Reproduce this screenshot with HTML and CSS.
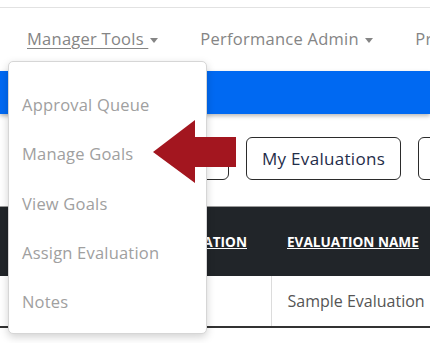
FILE: index.html
```html
<!DOCTYPE html>
<html lang="en">
<head>
    <meta charset="UTF-8">
    <meta name="viewport" content="width=device-width, initial-scale=1.0">
    <title>Manager Tools</title>
    <link rel="stylesheet" href="styles.css">
</head>
<body>
    <div class="topline"></div>

    <nav class="mainnav">
        <ul>
            <li><a href="#" class="active">Manager Tools <span class="caret"></span></a></li>
            <li><a href="#">Performance Admin <span class="caret"></span></a></li>
            <li><a href="#">Profile <span class="caret"></span></a></li>
        </ul>
    </nav>

    <div class="bluebar"></div>

    <div class="toolbar">
        <button class="btn btn-first">Team Evaluations</button>
        <button class="btn">My Evaluations</button>
        <button class="btn">Archived Evaluations</button>
    </div>

    <table class="evals">
        <colgroup>
            <col class="c1">
            <col class="c2">
            <col class="c3">
        </colgroup>
        <thead>
            <tr>
                <th class="col-first"><a href="#">TYPE OF EVALUATION</a></th>
                <th><a href="#">EVALUATION NAME</a></th>
                <th><a href="#">STATUS</a></th>
            </tr>
        </thead>
        <tbody>
            <tr>
                <td class="col-first"></td>
                <td>Sample Evaluation</td>
                <td>Open</td>
            </tr>
        </tbody>
    </table>

    <!-- open dropdown under Manager Tools -->
    <ul class="dropdown">
        <li><a href="#">Approval Queue</a></li>
        <li><a href="#">Manage Goals</a></li>
        <li><a href="#">View Goals</a></li>
        <li><a href="#">Assign Evaluation</a></li>
        <li><a href="#">Notes</a></li>
    </ul>

    <!-- callout arrow pointing at Manage Goals -->
    <svg class="callout" width="90" height="72" viewBox="150 115 90 72">
        <polygon points="153,152 195,120 195,137 236,137 236,167 195,167 195,183" fill="#a3161f"/>
    </svg>
</body>
</html>
```

FILE: styles.css
```css
* { box-sizing: border-box; }
html, body { overflow: hidden; }
body { margin: 0; font-family: "Open Sans", "Liberation Sans", sans-serif; background: #fff; width: 430px; height: 343px; position: relative; }

.topline { height: 8px; border-bottom: 1px solid #e2e2e2; }

.mainnav ul { list-style: none; margin: 0; padding: 0 0 2px 27px; display: flex; gap: 42px; height: 63px; align-items: center; white-space: nowrap; }
.mainnav a { color: #858585; font-size: 16.5px; letter-spacing: 0.25px; text-decoration: none; }
.mainnav a.active { text-decoration: underline; text-underline-offset: 3px; }
.caret { display: inline-block; width: 0; height: 0; border-left: 4.5px solid transparent; border-right: 4.5px solid transparent; border-top: 5px solid #858585; vertical-align: middle; margin-left: 2px; }

.bluebar { height: 43px; background: #0069f2; box-shadow: 0 2px 4px rgba(0, 0, 0, 0.28); }

.toolbar { display: flex; gap: 17px; padding: 23px 0 0 20px; white-space: nowrap; }
.btn { height: 43px; padding: 0 15px; background: #fff; border: 1px solid #2b2b2b; border-radius: 6px; font-family: inherit; font-size: 17px; letter-spacing: 0.3px; color: #1f2d4a; flex-shrink: 0; }
.btn-first { width: 209px; }

.evals { border-collapse: collapse; table-layout: fixed; width: 661px; margin-top: 26px; border-top: 1px solid #9a9a9a; white-space: nowrap; }
.evals .c1 { width: 271px; }
.evals .c2 { width: 230px; }
.evals .c3 { width: 160px; }
.evals th { background: #212529; height: 69px; text-align: left; padding: 0 16px; }
.evals th a { color: #fff; font-size: 13.6px; font-weight: 700; text-decoration: underline; }
.evals td { height: 51px; padding: 0 16px; font-size: 16px; color: #555; border-bottom: 2px solid #333; border-left: 1px solid #dcdcdc; }
.evals th.col-first { text-align: right; padding-right: 24px; }
.evals td.col-first { border-left: none; }

.dropdown { position: absolute; left: 8px; top: 61px; width: 199px; height: 273px; margin: 0; padding: 18px 0 0; list-style: none; background: #fff; border: 1px solid #d6d6d6; border-radius: 5px; box-shadow: 0 3px 8px rgba(0, 0, 0, 0.18); }
.dropdown li { height: 49.25px; display: flex; align-items: center; padding-left: 13px; }
.dropdown a { color: #a0a0a0; font-size: 16.5px; letter-spacing: 0.2px; text-decoration: none; }

.callout { position: absolute; left: 150px; top: 115px; }
```
